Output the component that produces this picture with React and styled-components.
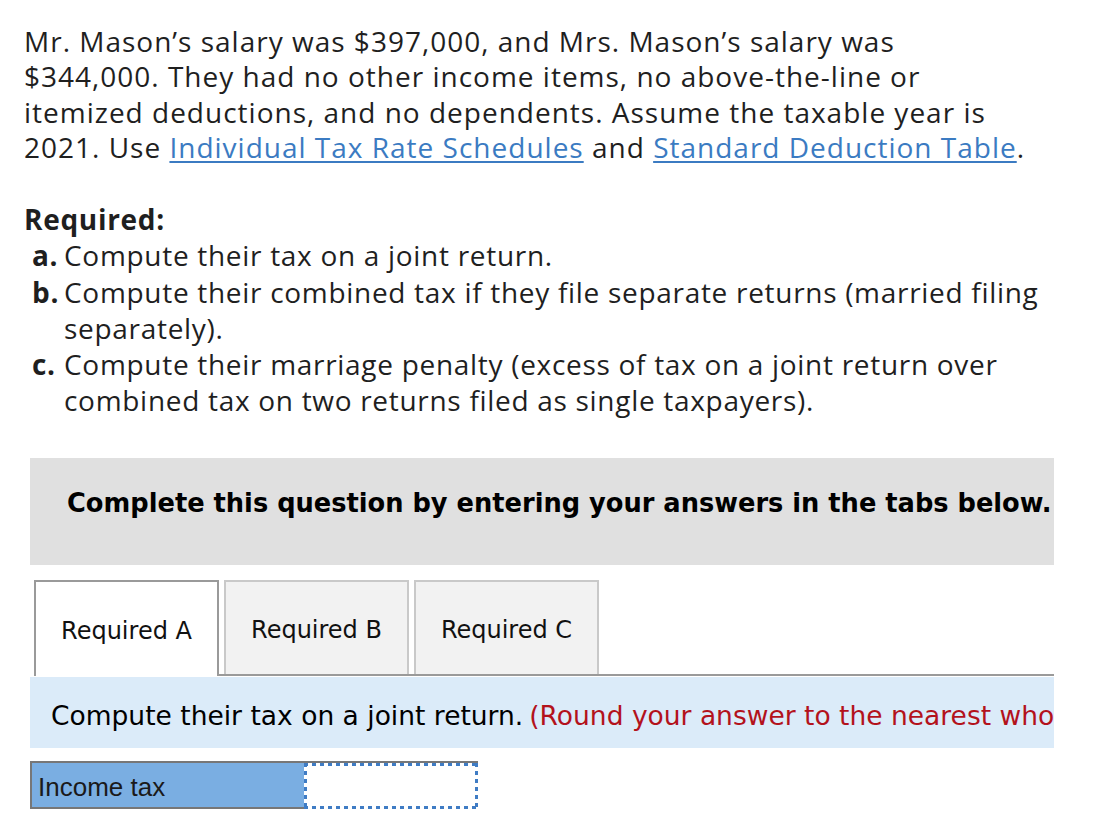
import React from "react";
import styled, { createGlobalStyle } from "styled-components";

const GlobalStyle = createGlobalStyle`
  body {
    margin: 0;
    background: #ffffff;
  }
`;

const Page = styled.div`
  width: 1094px;
  padding: 24px 0 0 24px;
  box-sizing: border-box;
  font-family: "Open Sans", "Lato", sans-serif;
  color: #1f1f1f;
`;

const Intro = styled.p`
  margin: 0 0 36px;
  font-size: 28px;
  letter-spacing: 1px;
  line-height: 35.3px;
  white-space: nowrap;
`;

const DocLink = styled.a`
  color: #3b7bc2;
  text-decoration: underline;
  text-underline-offset: 3px;
  cursor: pointer;
`;

const Required = styled.div`
  font-size: 28px;
  letter-spacing: 0.7px;
  line-height: 36.2px;
  white-space: nowrap;
`;

const RequiredTitle = styled.div`
  font-weight: 700;
`;

const Items = styled.ol`
  list-style: none;
  margin: 0;
  padding: 0 0 0 8px;
`;

const Item = styled.li`
  display: flex;
`;

const ItemMark = styled.span`
  font-weight: 700;
  width: 32px;
  flex-shrink: 0;
`;

const Work = styled.div`
  margin: 40px 0 0 6px;
  width: 1024px;
  font-family: "DejaVu Sans", Verdana, sans-serif;
`;

const Notice = styled.div`
  box-sizing: border-box;
  height: 107px;
  background: #e0e0e0;
  display: flex;
  align-items: center;
  padding: 0 0 18px 37px;
  overflow: hidden;
  white-space: nowrap;
  font-size: 25.7px;
  font-weight: 700;
  color: #000;
`;

const Tabs = styled.div`
  display: flex;
  margin-top: 15px;
  padding-left: 4px;
  height: 96px;
`;

const Tab = styled.div`
  box-sizing: border-box;
  width: 185px;
  display: flex;
  align-items: center;
  justify-content: center;
  padding-top: 3px;
  font-size: 24px;
  color: #111;
  border: 2px solid ${(p) => (p.$active ? "#9a9a9a" : "#c9c9c9")};
  border-bottom: none;
  background: ${(p) => (p.$active ? "#ffffff" : "#f2f2f2")};
  height: ${(p) => (p.$active ? "96px" : "94px")};
`;

const TabRest = styled.div`
  flex: 1;
  display: flex;
  gap: 5px;
  padding-left: 5px;
  border-bottom: 2px solid #9a9a9a;
`;

const Instruction = styled.div`
  box-sizing: border-box;
  height: 71px;
  margin-top: 1px;
  background: #dbebf9;
  display: flex;
  align-items: center;
  padding: 5px 0 0 21px;
  white-space: nowrap;
  overflow: hidden;
  font-size: 26.5px;
  color: #000;
`;

const Hint = styled.span`
  color: #b3121c;
  margin-left: 6px;
`;

const AnswerRow = styled.div`
  display: flex;
  margin-top: 13px;
  width: 448px;
  border-top: 2px solid #777;
`;

const Label = styled.div`
  box-sizing: border-box;
  width: 274px;
  height: 46px;
  background: #7aaee2;
  border-left: 2px solid #777;
  border-bottom: 2px solid #777;
  display: flex;
  align-items: center;
  padding: 4px 0 0 6px;
  font-family: "Liberation Sans", Arial, sans-serif;
  font-size: 26px;
  color: #1a1a1a;
`;

const dots = "#3f7cc4";

const Answer = styled.input`
  box-sizing: border-box;
  width: 174px;
  height: 46px;
  border: none;
  outline: none;
  padding: 0 8px;
  font-size: 20px;
  background:
    linear-gradient(to right, ${dots} 50%, transparent 0) top left / 8px 3px repeat-x,
    linear-gradient(to right, ${dots} 50%, transparent 0) bottom left / 8px 3px repeat-x,
    linear-gradient(to bottom, ${dots} 50%, transparent 0) top left / 3px 8px repeat-y,
    linear-gradient(to bottom, ${dots} 50%, transparent 0) top right / 3px 8px repeat-y,
    #ffffff;
`;

export default function App() {
  return (
    <>
      <GlobalStyle />
      <Page>
        <Intro>
          Mr. Mason’s salary was $397,000, and Mrs. Mason’s salary was
          <br />
          $344,000. They had no other income items, no above-the-line or
          <br />
          itemized deductions, and no dependents. Assume the taxable year is
          <br />
          2021. Use <DocLink>Individual Tax Rate Schedules</DocLink> and{" "}
          <DocLink>Standard Deduction Table</DocLink>.
        </Intro>
        <Required>
          <RequiredTitle>Required:</RequiredTitle>
          <Items>
            <Item>
              <ItemMark>a.</ItemMark>
              <span>Compute their tax on a joint return.</span>
            </Item>
            <Item>
              <ItemMark>b.</ItemMark>
              <span>
                Compute their combined tax if they file separate returns
                (married filing
                <br />
                separately).
              </span>
            </Item>
            <Item>
              <ItemMark>c.</ItemMark>
              <span>
                Compute their marriage penalty (excess of tax on a joint return
                over
                <br />
                combined tax on two returns filed as single taxpayers).
              </span>
            </Item>
          </Items>
        </Required>
        <Work>
          <Notice>
            Complete this question by entering your answers in the tabs below.
          </Notice>
          <Tabs>
            <Tab $active>Required A</Tab>
            <TabRest>
              <Tab>Required B</Tab>
              <Tab>Required C</Tab>
            </TabRest>
          </Tabs>
          <Instruction>
            Compute their tax on a joint return.
            <Hint>(Round your answer to the nearest whole dollar amount.)</Hint>
          </Instruction>
          <AnswerRow>
            <Label>Income tax</Label>
            <Answer type="text" />
          </AnswerRow>
        </Work>
      </Page>
    </>
  );
}
